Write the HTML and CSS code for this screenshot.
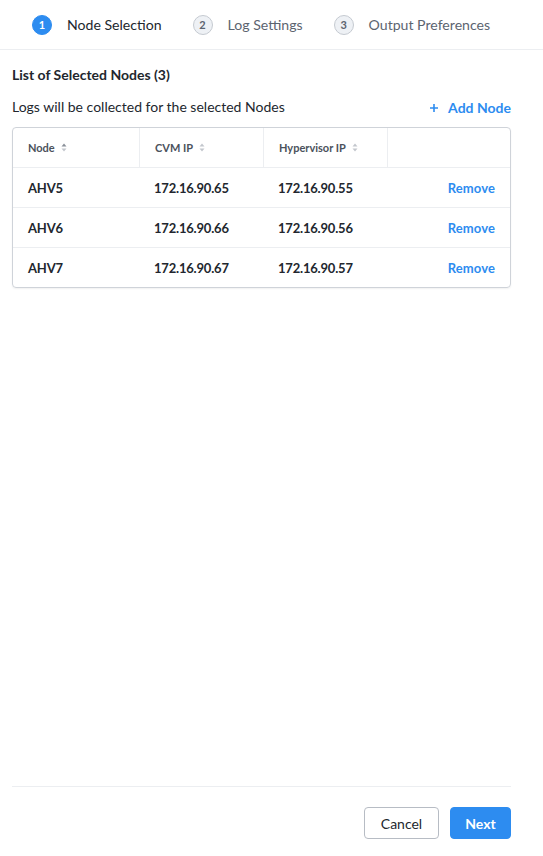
FILE: index.html
```html
<!DOCTYPE html>
<html>
<head>
<meta charset="utf-8">
<link rel="stylesheet" href="styles.css">
</head>
<body>
<div class="page">
  <div class="steps">
    <div class="step active"><span class="num">1</span><span class="label">Node Selection</span></div>
    <div class="step"><span class="num">2</span><span class="label">Log Settings</span></div>
    <div class="step"><span class="num">3</span><span class="label">Output Preferences</span></div>
  </div>
  <div class="content">
    <div class="title">List of Selected Nodes (3)</div>
    <div class="subrow">
      <span class="subtitle">Logs will be collected for the selected Nodes</span>
      <a class="add">
        <svg width="10" height="10" viewBox="0 0 10 10"><path d="M5 1v8M1 5h8" stroke="#2d8cf0" stroke-width="1.6" fill="none"/></svg>
        <span>Add Node</span>
      </a>
    </div>
    <div class="table">
      <div class="row head">
        <div class="cell">Node <svg class="sort" width="6" height="9" viewBox="0 0 6 9"><path d="M3 0.5L5.5 3.5H0.5Z" fill="#8a9099"/><path d="M3 8.5L5.5 5.5H0.5Z" fill="#c3c7cd"/></svg></div>
        <div class="cell">CVM IP <svg class="sort" width="6" height="9" viewBox="0 0 6 9"><path d="M3 0.5L5.5 3.5H0.5Z" fill="#c3c7cd"/><path d="M3 8.5L5.5 5.5H0.5Z" fill="#c3c7cd"/></svg></div>
        <div class="cell">Hypervisor IP <svg class="sort" width="6" height="9" viewBox="0 0 6 9"><path d="M3 0.5L5.5 3.5H0.5Z" fill="#c3c7cd"/><path d="M3 8.5L5.5 5.5H0.5Z" fill="#c3c7cd"/></svg></div>
        <div class="cell"></div>
      </div>
      <div class="row">
        <div class="cell">AHV5</div><div class="cell">172.16.90.65</div><div class="cell">172.16.90.55</div><div class="cell act"><a class="remove">Remove</a></div>
      </div>
      <div class="row">
        <div class="cell">AHV6</div><div class="cell">172.16.90.66</div><div class="cell">172.16.90.56</div><div class="cell act"><a class="remove">Remove</a></div>
      </div>
      <div class="row">
        <div class="cell">AHV7</div><div class="cell">172.16.90.67</div><div class="cell">172.16.90.57</div><div class="cell act"><a class="remove">Remove</a></div>
      </div>
    </div>
  </div>
  <div class="footer">
    <button class="btn cancel">Cancel</button>
    <button class="btn next">Next</button>
  </div>
</div>
</body>
</html>
```

FILE: styles.css
```css
html, body {
  margin: 0;
  padding: 0;
  background: #fff;
}
body {
  font-family: Lato, "Liberation Sans", sans-serif;
  color: #22272e;
}
.page {
  height: 856px;
  display: flex;
  flex-direction: column;
}
.steps {
  height: 49px;
  border-bottom: 1px solid #eceef1;
  display: flex;
  align-items: center;
  padding-left: 32px;
  gap: 31px;
}
.step {
  display: flex;
  align-items: center;
  gap: 15px;
}
.num {
  width: 18px;
  height: 18px;
  border-radius: 50%;
  border: 1px solid #c5cad1;
  background: #eef1f5;
  color: #5c6470;
  font-size: 11px;
  font-weight: 700;
  display: flex;
  align-items: center;
  justify-content: center;
}
.step.active .num {
  background: #2d8cf0;
  border-color: #2d8cf0;
  color: #fff;
}
.label {
  font-size: 14.1px;
  color: #5c6470;
}
.step.active .label {
  color: #22272e;
}
.content {
  flex: 1;
  padding: 16px 32px 0 12px;
}
.title {
  font-size: 14px;
  font-weight: 700;
  line-height: 18px;
}
.subrow {
  margin-top: 11px;
  display: flex;
  justify-content: space-between;
  align-items: center;
  line-height: 20px;
}
.subtitle {
  font-size: 14px;
}
.add {
  display: flex;
  align-items: center;
  gap: 9px;
  color: #2d8cf0;
  font-weight: 700;
  font-size: 14px;
  margin-top: 3px;
}
.table {
  margin-top: 9px;
  border: 1px solid #cfd3d9;
  border-radius: 4px;
  box-shadow: 0 1px 2px rgba(0,0,0,0.06);
}
.row {
  display: grid;
  grid-template-columns: 126px 124px 124px 1fr;
  height: 39px;
  border-top: 1px solid #eceef1;
}
.row.head {
  border-top: none;
  height: 39px;
}
.cell {
  display: flex;
  align-items: center;
  padding-left: 15px;
  font-size: 13px;
  font-weight: 700;
  color: #22272e;
  letter-spacing: -0.2px;
}
.head .cell {
  font-size: 11px;
  color: #4b525c;
  border-left: 1px solid #eceef1;
  gap: 6px;
  letter-spacing: 0;
}
.head .cell:first-child {
  border-left: none;
}
.sort {
  margin-top: -1px;
}
.cell.act {
  justify-content: flex-end;
  padding-right: 15px;
}
.remove {
  color: #2d8cf0;
  font-weight: 700;
  letter-spacing: 0.1px;
}
.footer {
  margin: 0 32px 0 12px;
  border-top: 1px solid #eceef1;
  padding: 20px 0 17px;
  display: flex;
  justify-content: flex-end;
  gap: 11px;
}
.btn {
  height: 32px;
  border-radius: 4px;
  font-family: Lato, "Liberation Sans", sans-serif;
  font-size: 14px;
  padding: 0;
}
.cancel {
  width: 75px;
  background: #fff;
  border: 1px solid #b7bcc4;
  color: #22272e;
}
.next {
  width: 61px;
  background: #2d8cf0;
  border: 1px solid #2d8cf0;
  color: #fff;
  font-weight: 700;
}
```
